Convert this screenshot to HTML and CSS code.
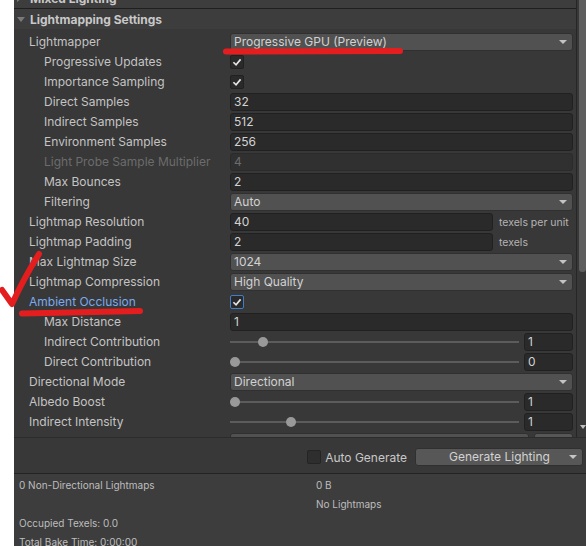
FILE: index.html
```html
<!DOCTYPE html>
<html lang="en">
<head>
  <meta charset="UTF-8" />
  <title>Lighting</title>
  <link rel="stylesheet" href="styles.css">
</head>
<body>
  <div class="window">
    <div class="scroll">
      <div class="inspector">
        <div class="foldout foldout--mixed"><span class="foldout__arrow foldout__arrow--closed"></span>Mixed Lighting</div>
        <div class="foldout"><span class="foldout__arrow"></span>Lightmapping Settings</div>

        <div class="rows">
          <div class="row">
            <span class="label">Lightmapper</span>
            <div class="popup">Progressive GPU (Preview)</div>
          </div>
          <div class="row row--sub">
            <span class="label">Progressive Updates</span>
            <span class="toggle"><svg viewBox="0 0 10 10"><path d="M2 5.2 L4.2 7.3 L8 2.8" /></svg></span>
          </div>
          <div class="row row--sub">
            <span class="label">Importance Sampling</span>
            <span class="toggle"><svg viewBox="0 0 10 10"><path d="M2 5.2 L4.2 7.3 L8 2.8" /></svg></span>
          </div>
          <div class="row row--sub">
            <span class="label">Direct Samples</span>
            <div class="field">32</div>
          </div>
          <div class="row row--sub">
            <span class="label">Indirect Samples</span>
            <div class="field">512</div>
          </div>
          <div class="row row--sub">
            <span class="label">Environment Samples</span>
            <div class="field">256</div>
          </div>
          <div class="row row--sub row--disabled">
            <span class="label">Light Probe Sample Multiplier</span>
            <div class="field">4</div>
          </div>
          <div class="row row--sub">
            <span class="label">Max Bounces</span>
            <div class="field">2</div>
          </div>
          <div class="row row--sub">
            <span class="label">Filtering</span>
            <div class="popup">Auto</div>
          </div>
          <div class="row">
            <span class="label">Lightmap Resolution</span>
            <div class="field">40</div>
            <span class="suffix">texels per unit</span>
          </div>
          <div class="row">
            <span class="label">Lightmap Padding</span>
            <div class="field">2</div>
            <span class="suffix">texels</span>
          </div>
          <div class="row">
            <span class="label">Max Lightmap Size</span>
            <div class="popup">1024</div>
          </div>
          <div class="row">
            <span class="label">Lightmap Compression</span>
            <div class="popup">High Quality</div>
          </div>
          <div class="row row--focus">
            <span class="label">Ambient Occlusion</span>
            <span class="toggle"><svg viewBox="0 0 10 10"><path d="M2 5.2 L4.2 7.3 L8 2.8" /></svg></span>
          </div>
          <div class="row row--sub">
            <span class="label">Max Distance</span>
            <div class="field">1</div>
          </div>
          <div class="row row--sub">
            <span class="label">Indirect Contribution</span>
            <div class="slider"><span class="slider__thumb" style="--pos: 0.1"></span></div>
            <div class="field field--small">1</div>
          </div>
          <div class="row row--sub">
            <span class="label">Direct Contribution</span>
            <div class="slider"><span class="slider__thumb" style="--pos: 0"></span></div>
            <div class="field field--small">0</div>
          </div>
          <div class="row">
            <span class="label">Directional Mode</span>
            <div class="popup">Directional</div>
          </div>
          <div class="row">
            <span class="label">Albedo Boost</span>
            <div class="slider"><span class="slider__thumb" style="--pos: 0"></span></div>
            <div class="field field--small">1</div>
          </div>
          <div class="row">
            <span class="label">Indirect Intensity</span>
            <div class="slider"><span class="slider__thumb" style="--pos: 0.2"></span></div>
            <div class="field field--small">1</div>
          </div>
          <!-- next row is scrolled below the fold, only its top edge shows -->
          <div class="row">
            <span class="label"></span>
            <div class="popup popup--bare"></div>
            <div class="button button--small"></div>
          </div>
        </div>
      </div>

      <div class="scrollbar">
        <span class="scrollbar__thumb"></span>
        <span class="scrollbar__down"></span>
      </div>
    </div>

    <div class="toolbar">
      <span class="toggle toggle--off"></span>
      <span class="toolbar__label">Auto Generate</span>
      <div class="button button--generate">Generate Lighting</div>
    </div>

    <div class="stats">
      <div class="stats__col stats__col--left">
        <p>0 Non-Directional Lightmaps</p>
        <p>&nbsp;</p>
        <p>Occupied Texels: 0.0</p>
        <p>Total Bake Time: 0:00:00</p>
      </div>
      <div class="stats__col">
        <p>0 B</p>
        <p>No Lightmaps</p>
      </div>
    </div>
  </div>

  <!-- red marker annotations drawn over the screenshot -->
  <svg class="marks" viewBox="0 0 586 546">
    <path d="M226 51.5 L400 51" />
    <path d="M22 313.5 L140 311" />
    <path d="M2 290 Q7 297 12 304 Q24 278 39 254" />
  </svg>
</body>
</html>
```

FILE: styles.css
```css
* {
  margin: 0;
  padding: 0;
  box-sizing: border-box;
}

body {
  width: 586px;
  height: 546px;
  overflow: hidden;
  position: relative;
  background-color: #fff;
  font-family: Inter, "Noto Sans", sans-serif;
  font-size: 12px;
  color: #c4c4c4;
}

.window {
  margin-left: 14px;
  height: 546px;
  background-color: #383838;
  display: flex;
  flex-direction: column;
}

.scroll {
  flex: none;
  height: 437px;
  display: flex;
  overflow: hidden;
}

.inspector {
  flex: 1;
  overflow: hidden;
}

/* foldout headers */
.foldout {
  height: 21px;
  border-top: 1px solid #1f1f1f;
  background-color: #3d3d3d;
  display: flex;
  align-items: center;
  padding-left: 3px;
  font-weight: 700;
  color: #c8c8c8;
}

.foldout--mixed {
  margin-top: -13px;
}

.foldout__arrow {
  width: 0;
  height: 0;
  margin: 0 5px 0 0;
  border-left: 4px solid transparent;
  border-right: 4px solid transparent;
  border-top: 5px solid #7a7a7a;
}

.foldout__arrow--closed {
  border-top: 4px solid transparent;
  border-bottom: 4px solid transparent;
  border-left: 5px solid #7a7a7a;
  border-right: 3px solid transparent;
}

.rows {
  padding-top: 3px;
}

.row {
  height: 20px;
  display: flex;
  align-items: center;
  padding: 0 3px 0 15px;
}

.label {
  flex: none;
  width: 201px;
  white-space: nowrap;
  line-height: 20px;
}

.row--sub .label {
  padding-left: 15px;
}

.row--disabled .label {
  color: #6c6c6c;
}

.row--focus .label {
  color: #7aaaee;
}

/* controls */
.field {
  flex: 1;
  height: 18px;
  line-height: 16px;
  padding: 0 3px;
  background-color: #2a2a2a;
  border: 1px solid #212121;
  border-radius: 3px;
  color: #d2d2d2;
}

.row--disabled .field {
  background-color: #303030;
  border-color: #2b2b2b;
  color: #6c6c6c;
}

.field--small {
  flex: none;
  width: 49px;
  margin-left: 5px;
}

.suffix {
  flex: none;
  width: 74px;
  margin-left: 6px;
  font-size: 10.5px;
  color: #b4b4b4;
  white-space: nowrap;
}

.popup,
.button {
  flex: 1;
  height: 18px;
  line-height: 16px;
  padding: 0 5px 0 3px;
  background-color: #515151;
  border: 1px solid #303030;
  border-radius: 3px;
  color: #d2d2d2;
  display: flex;
  align-items: center;
  justify-content: space-between;
  white-space: nowrap;
}

.popup::after,
.button--generate::after {
  content: "";
  width: 0;
  height: 0;
  border-left: 4px solid transparent;
  border-right: 4px solid transparent;
  border-top: 4px solid #c4c4c4;
}

.popup--bare::after {
  display: none;
}

.button {
  background-color: #575757;
}

.button--small {
  flex: none;
  width: 39px;
  margin-left: 5px;
}

.toggle {
  width: 14px;
  height: 14px;
  background-color: #2a2a2a;
  border: 1px solid #212121;
  border-radius: 2px;
  display: flex;
}

.toggle svg {
  width: 12px;
  height: 12px;
  fill: none;
  stroke: #e4e4e4;
  stroke-width: 1.4;
}

.row--focus .toggle {
  border-color: #3d7fc8;
}

.slider {
  flex: 1;
  height: 18px;
  position: relative;
}

.slider::before {
  content: "";
  position: absolute;
  left: 0;
  right: 0;
  top: 8px;
  height: 2px;
  background-color: #5c5c5c;
}

.slider__thumb {
  position: absolute;
  top: 4px;
  left: calc((100% - 10px) * var(--pos));
  width: 10px;
  height: 10px;
  border-radius: 50%;
  background-color: #999;
}

/* scrollbar */
.scrollbar {
  flex: none;
  width: 10px;
  border-left: 1px solid #262626;
  display: flex;
  flex-direction: column;
  align-items: flex-end;
}

.scrollbar__thumb {
  width: 7px;
  height: 272px;
  background-color: #5e5e5e;
  border-radius: 0 0 3px 3px;
}

.scrollbar__down {
  margin-top: auto;
  margin-bottom: 8px;
  width: 0;
  height: 0;
  border-left: 3px solid transparent;
  border-right: 3px solid transparent;
  border-top: 4px solid #c0c0c0;
}

/* bottom toolbar */
.toolbar {
  flex: none;
  height: 37px;
  padding: 3px 3px 0 0;
  border-top: 1px solid #2c2c2c;
  border-bottom: 1px solid #232323;
  display: flex;
  align-items: center;
  justify-content: flex-end;
}

.toggle--off {
  background-color: #2e2e2e;
  border-color: #242424;
}

.toolbar__label {
  margin: 0 8px 0 4px;
  color: #c8c8c8;
}

.button--generate {
  flex: none;
  width: 168px;
  padding: 0 5px 0 33px;
}

/* stats */
.stats {
  flex: 1;
  display: flex;
  padding: 2px 5px 0;
  background-color: #3d3d3d;
  font-size: 10px;
  line-height: 19px;
  color: #bdbdbd;
}

.stats__col--left {
  width: 297px;
}

.marks {
  position: absolute;
  top: 0;
  left: 0;
  width: 586px;
  height: 546px;
  pointer-events: none;
  fill: none;
  stroke: #e41e1e;
  stroke-width: 6;
  stroke-linecap: round;
  stroke-linejoin: round;
}
```
